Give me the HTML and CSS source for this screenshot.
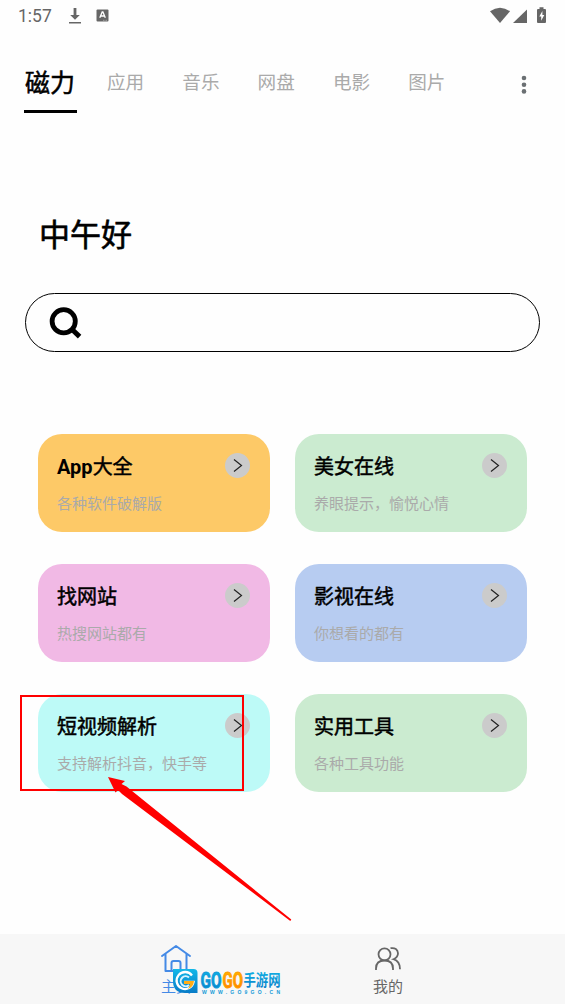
FILE: index.html
```html
<!DOCTYPE html>
<html lang="zh-CN">
<head>
<meta charset="utf-8">
<title>磁力</title>
<link rel="stylesheet" href="styles.css">
</head>
<body>
<div class="screen">
  <header class="status">
    <span class="time">1:57</span>
    <svg class="download" width="14" height="18" viewBox="0 0 14 18"><path d="M5.6 1h2.8v7h3.4L7 12.8 2.2 8h3.4zM1 15h12v1.5H1z" fill="#666"/></svg>
    <svg class="keyboard" width="13" height="13" viewBox="0 0 13 13"><rect x=".5" y=".5" width="12" height="12" rx="1" fill="#666"/><path d="M3.8 8.7 6.2 3h.7l2.4 5.7M4.8 7h3.5" fill="none" stroke="#fff" stroke-width="1.3"/><path d="M7 11.3h4" stroke="#bbb" stroke-width=".7" stroke-dasharray="1 .5"/></svg>
    <svg class="signals" width="58" height="18" viewBox="0 0 58 18" fill="#666"><path d="M0 4.3Q10-3 20 4.3L10 16z"/><path d="M37 2.5V16H23z"/><path d="M49.5.3h4V2H55q1 0 1 1v12q0 1-1 1h-7q-1 0-1-1V3q0-1 1-1h1.5z"/><path d="M52.4 4 49.3 9.6h1.9v4.1l3.1-5.6h-1.9z" fill="#fff"/></svg>
  </header>
  <nav class="tabs">
    <span class="tab active">磁力</span><span class="tab">应用</span><span class="tab">音乐</span><span class="tab">网盘</span><span class="tab">电影</span><span class="tab">图片</span>
    <svg class="more" width="6" height="20" viewBox="0 0 6 20" fill="#6b7073"><circle cx="3" cy="3" r="2.3"/><circle cx="3" cy="9.7" r="2.3"/><circle cx="3" cy="16.4" r="2.3"/></svg>
  </nav>
  <h1 class="greeting">中午好</h1>
  <div class="search"><svg width="34" height="34" viewBox="0 0 34 34" fill="none" stroke="#000"><circle cx="14.7" cy="15.3" r="11.6" stroke-width="4.8"/><path d="m22.6 23 8 7.600" stroke-width="5"/></svg></div>
  <main class="grid">
    <section class="card orange"><div class="row"><h2><b>App</b>大全</h2><svg class="go" viewBox="0 0 26 26"><circle cx="12.5" cy="12.5" r="12.5"/><path d="m9 6.5 7.500 6-7.500 6"/></svg></div><p>各种软件破解版</p></section>
    <section class="card green"><div class="row"><h2>美女在线</h2><svg class="go" viewBox="0 0 26 26"><circle cx="12.5" cy="12.5" r="12.5"/><path d="m9 6.5 7.500 6-7.500 6"/></svg></div><p>养眼提示，愉悦心情</p></section>
    <section class="card pink"><div class="row"><h2>找网站</h2><svg class="go" viewBox="0 0 26 26"><circle cx="12.5" cy="12.5" r="12.5"/><path d="m9 6.5 7.500 6-7.500 6"/></svg></div><p>热搜网站都有</p></section>
    <section class="card blue"><div class="row"><h2>影视在线</h2><svg class="go" viewBox="0 0 26 26"><circle cx="12.5" cy="12.5" r="12.5"/><path d="m9 6.5 7.500 6-7.500 6"/></svg></div><p>你想看的都有</p></section>
    <section class="card cyan"><div class="row"><h2>短视频解析</h2><svg class="go" viewBox="0 0 26 26"><circle cx="12.5" cy="12.5" r="12.5"/><path d="m9 6.5 7.500 6-7.500 6"/></svg></div><p>支持解析抖音，快手等</p></section>
    <section class="card green"><div class="row"><h2>实用工具</h2><svg class="go" viewBox="0 0 26 26"><circle cx="12.5" cy="12.5" r="12.5"/><path d="m9 6.5 7.500 6-7.500 6"/></svg></div><p>各种工具功能</p></section>
  </main>
  <footer class="bottom">
    <div class="item home"><svg width="32" height="30" viewBox="0 0 32 30" fill="none" stroke="#448ae6" stroke-width="2"><path d="M2 12 16 2l14 10M5.500 10v17h21V10M11.500 27v-8q0-2 2-2h5q2 0 2 2v8" stroke-linejoin="round" stroke-linecap="round"/></svg><span>主页</span></div>
    <div class="item"><svg width="32" height="30" viewBox="0 0 32 30" fill="none" stroke="#666" stroke-width="1.8"><circle cx="12.500" cy="10.300" r="6"/><path d="M4 26v-1.500q0-8 8.500-8t8.500 8V26M18.500 4.200q7-1 7.500 5 0 4-4.500 6 6.500 2 6.500 10"/></svg><span>我的</span></div>
  </footer>
  <svg class="annotation" width="565" height="1004" viewBox="0 0 565 1004">
    <rect x="21" y="696" width="222" height="94" fill="none" stroke="#f00" stroke-width="2"/>
    <path d="m108 777 17 4-3.500 3 5 2.500L291.300 919.500l-1 1.500L122 794l-4-4-2.500 2.500z" fill="#f00"/>
  </svg>
  <svg class="watermark" width="112" height="30" viewBox="0 0 112 30">
    <defs>
      <linearGradient id="aqua" x2="0" y2="1"><stop stop-color="#13b8e8"/><stop offset="1" stop-color="#087bc7"/></linearGradient>
      <linearGradient id="gold" x2="0" y2="1"><stop stop-color="#ffbd00"/><stop offset="1" stop-color="#ff7900"/></linearGradient>
    </defs>
    <path d="M1 1h20.500q4 0 4 4v20H13Q1 25 1 13z" fill="url(#aqua)"/>
    <path d="M20 7.500A8.500 8.500 0 1 0 21.500 14H12" fill="none" stroke="#fff" stroke-width="2.300"/>
    <path d="M17 9.500A5 5 0 1 0 17 17" fill="none" stroke="#d5f3ff" stroke-width="2"/>
    <path d="M12 13h10q-.5 6-6 8 2-3 2-5h-6z" fill="#ffad16"/>
    <g class="brand"><text x="28.500" y="19.500" textLength="21" lengthAdjust="spacingAndGlyphs" fill="url(#aqua)" stroke="#0c9cda">GO</text><text x="50.500" y="19.500" textLength="20.500" lengthAdjust="spacingAndGlyphs" fill="url(#gold)" stroke="#ff9c00">GO</text></g>
    <text class="brand-cn" x="71.500" y="18" textLength="37" lengthAdjust="spacingAndGlyphs" fill="url(#aqua)">手游网</text>
    <text class="url" x="30" y="25.500" textLength="78">WWW.GO9GO.CN</text>
  </svg>
</div>
</body>
</html>
```
FILE: styles.css
```css
* { box-sizing: border-box; }
body { margin: 0; background: #fefefe; font-family: Roboto, "Noto Sans CJK SC", sans-serif; }
h1, h2, p { margin: 0; font-weight: 400; }
svg { display: block; flex: none; overflow: visible; }
.screen { position: relative; width: 565px; height: 1004px; display: flex; flex-direction: column; overflow: hidden; }
.status { height: 32px; padding: 0 17px 0 18px; display: flex; align-items: center; color: #666; }
.time { width: 50px; font-size: 17.5px; line-height: 32px; }
.download { margin-bottom: 1px; }
.keyboard { margin-left: 14px; margin-bottom: 2px; }
.signals { margin-left: auto; }
.tabs { height: 81px; padding: 0 38px 0 24px; display: flex; }
.tab { width: 75.3px; padding-top: 33px; font-size: 18.6px; line-height: 36px; color: #aaa; white-space: nowrap; }
.active { width: 53px; height: 81px; margin-right: 30px; padding: 34px 0 0 1px; border-bottom: 3px solid #000; font-size: 25px; color: #000; -webkit-text-stroke: .5px #000; }
.more { margin: 43px 0 0 auto; }
.greeting { height: 60px; margin: 93px 0 0 39px; font-size: 31px; line-height: 60px; color: #000; -webkit-text-stroke: .6px #000; }
.search { width: 515px; height: 59px; margin: 27px 0 0 25px; padding-left: 23px; border: 1.3px solid #000; border-radius: 30px; display: flex; align-items: center; }
.grid { margin: 81.5px 38px 0; display: grid; grid-template-columns: 232px 232px; column-gap: 25px; row-gap: 31.5px; }
.card { height: 98.5px; padding: 18px 19px; border-radius: 24px; }
.row { height: 30px; display: flex; align-items: center; justify-content: space-between; }
.card h2 { font-size: 20px; line-height: 30px; color: #000; -webkit-text-stroke: .5px #000; }
.card b { font-weight: 700; -webkit-text-stroke: 0; }
.card p { margin-top: 9px; font-size: 15px; line-height: 26px; color: #aaa; }
.go { width: 26px; height: 26px; margin-bottom: 1px; fill: #cbcbcb; }
.go path { fill: none; stroke: #222; stroke-width: 1.2; }
.orange { background: #fdc967; }
.green { background: #cbebd0; }
.pink { background: #f1b9e5; }
.blue { background: #b7ccf1; }
.cyan { background: #bdfaf7; }
.bottom { height: 70px; margin-top: auto; padding: 10px 71px 0 70px; display: grid; grid-template-columns: 1fr 1fr; background: #f7f7f7; }
.item { display: flex; flex-direction: column; align-items: center; color: #666; font-size: 15px; line-height: 26px; }
.home { color: #448ae6; }
.annotation { position: absolute; left: 0; top: 0; }
.watermark { position: absolute; left: 172px; top: 968px; }
.brand { font: 700 22px Roboto, sans-serif; stroke-width: .9px; }
.brand-cn { font: 700 15.5px "Noto Sans CJK SC", sans-serif; }
.url { font: 700 5px "Liberation Sans", sans-serif; fill: #1399d8; }
```
